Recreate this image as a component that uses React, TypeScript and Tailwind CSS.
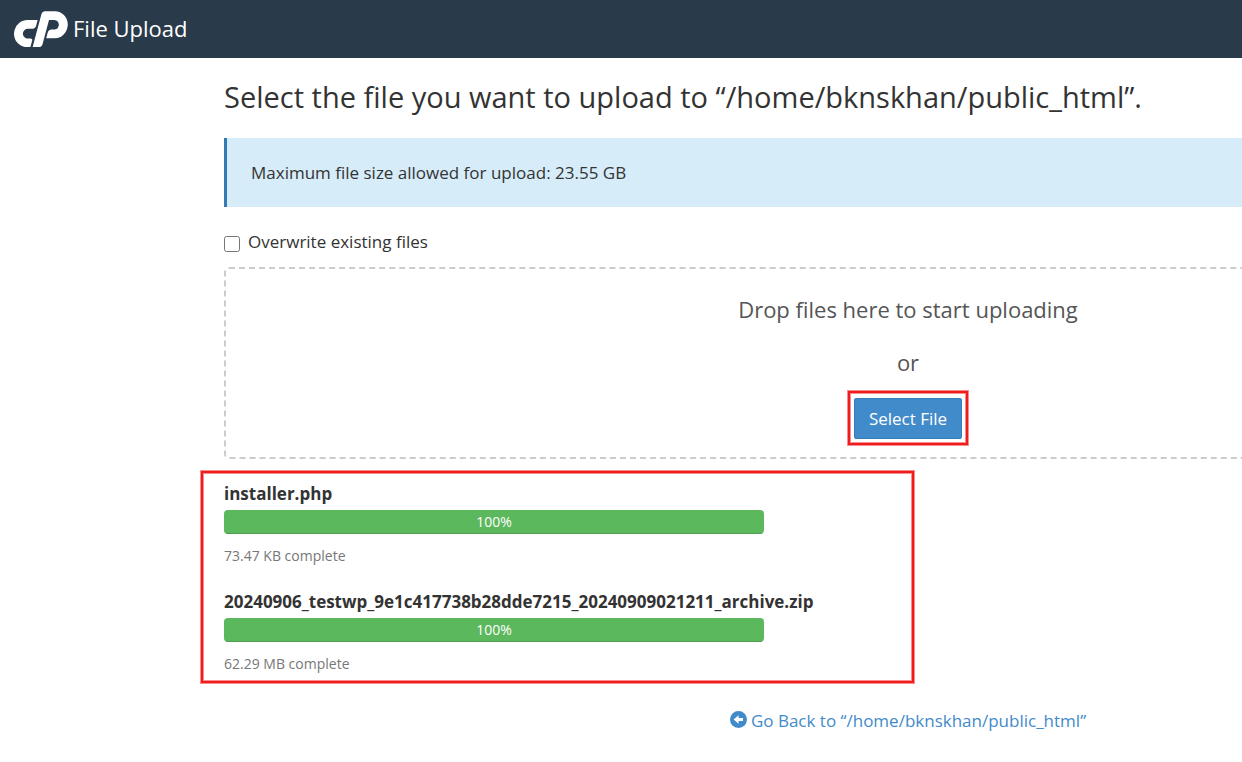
import React from "react";
import { SiCpanel } from "react-icons/si";

const uploadDir = "/home/bknskhan/public_html";

const uploads = [
  {
    name: "installer.php",
    size: "73.47 KB",
    percent: 100,
  },
  {
    name: "20240906_testwp_9e1c417738b28dde7215_20240909021211_archive.zip",
    size: "62.29 MB",
    percent: 100,
  },
];

const BackIcon = () => (
  <svg viewBox="0 0 17 17" className="size-[17px]" aria-hidden="true">
    <circle cx="8.5" cy="8.5" r="8.5" fill="currentColor" />
    <path d="M3.6 8.5 8.6 4.2V7H13v3H8.6v2.8Z" fill="#fff" />
  </svg>
);

const Header = () => {
  return (
    <header className="flex h-[58px] items-center gap-[5px] bg-[#293a4a] pl-3.5 text-white">
      {/* Only the "cP" part of the wordmark, the next letter is clipped off */}
      <SiCpanel
        viewBox="0 9.32 7.96 5.31"
        className="h-9 w-[54px] [clip-path:polygon(0_0,100%_0,100%_55%,88%_80%,88%_100%,0_100%)]"
        aria-label="cPanel"
      />
      <span className="pb-0.5 text-[22px] leading-8">File Upload</span>
    </header>
  );
};

const DropZone = () => {
  return (
    <div className="mt-[13px] flex h-48 flex-col items-center rounded-[5px] border-2 border-dashed border-[#ccc] pt-[22px] text-[22px] text-[#555]">
      <p className="leading-9">Drop files here to start uploading</p>
      <p className="mt-[17px] leading-9">or</p>
      {/* Highlighted action */}
      <div className="mt-[11px] border-2 border-[#ee1c1c] px-1 pt-[5px] pb-1 shadow-[0_0_0_1px_#f98c8c,inset_0_0_0_1px_#f98c8c]">
        <button
          type="button"
          className="block h-[41px] w-[108px] rounded-[2px] border border-[#357ebd] bg-[#428bca] text-[17px] leading-6 text-white"
        >
          Select File
        </button>
      </div>
    </div>
  );
};

const UploadList = () => {
  return (
    <ul className="mt-3 -ml-[23px] h-[212px] w-[713px] border-2 border-[#ee1c1c] pt-[9px] pl-[21px] shadow-[0_0_0_1px_#f98c8c,inset_0_0_0_1px_#f98c8c]">
      {uploads.map((item) => (
        <li key={item.name} className="h-[108px]">
          <h3 className="text-[17px] leading-6 font-bold">{item.name}</h3>
          <div className="mt-1 h-6 w-[540px] overflow-hidden rounded bg-[#f5f5f5]">
            <div
              className="h-full bg-[#5cb85c] text-center text-sm leading-6 text-white shadow-[inset_0_-1px_0_rgba(0,0,0,0.15)]"
              style={{ width: `${item.percent}%` }}
            >
              {item.percent}%
            </div>
          </div>
          <p className="mt-3 text-sm leading-5 text-[#777]">{item.size} complete</p>
        </li>
      ))}
    </ul>
  );
};

const App = () => {
  return (
    <div className="overflow-hidden bg-white font-['Open_Sans',sans-serif] text-[#333]">
      <Header />
      <main className="pl-56">
        {/* The content column is wider than the window and runs past its right edge */}
        <div className="-mr-[350px]">
          <h1 className="pt-[19px] text-[29px] leading-10">
            Select the file you want to upload to “{uploadDir}”.
          </h1>
          <div className="mt-[21px] border-l-[3px] border-[#337ab7] bg-[#d7ecf9] px-6 py-[22px] text-[17px] leading-[25px]">
            Maximum file size allowed for upload: 23.55 GB
          </div>
          <div className="mt-[23px] flex items-center gap-2">
            <input id="overwrite" type="checkbox" className="mt-1 size-4" />
            <label htmlFor="overwrite" className="text-[17px] leading-6">
              Overwrite existing files
            </label>
          </div>
          <DropZone />
          <UploadList />
          <div className="mt-[26px] flex justify-center">
            <a href="#back" className="flex items-start gap-1 text-[17px] leading-6 text-[#428bca]">
              <span className="pt-0.5">
                <BackIcon />
              </span>
              Go Back to “{uploadDir}”
            </a>
          </div>
        </div>
      </main>
    </div>
  );
};

export default App;
